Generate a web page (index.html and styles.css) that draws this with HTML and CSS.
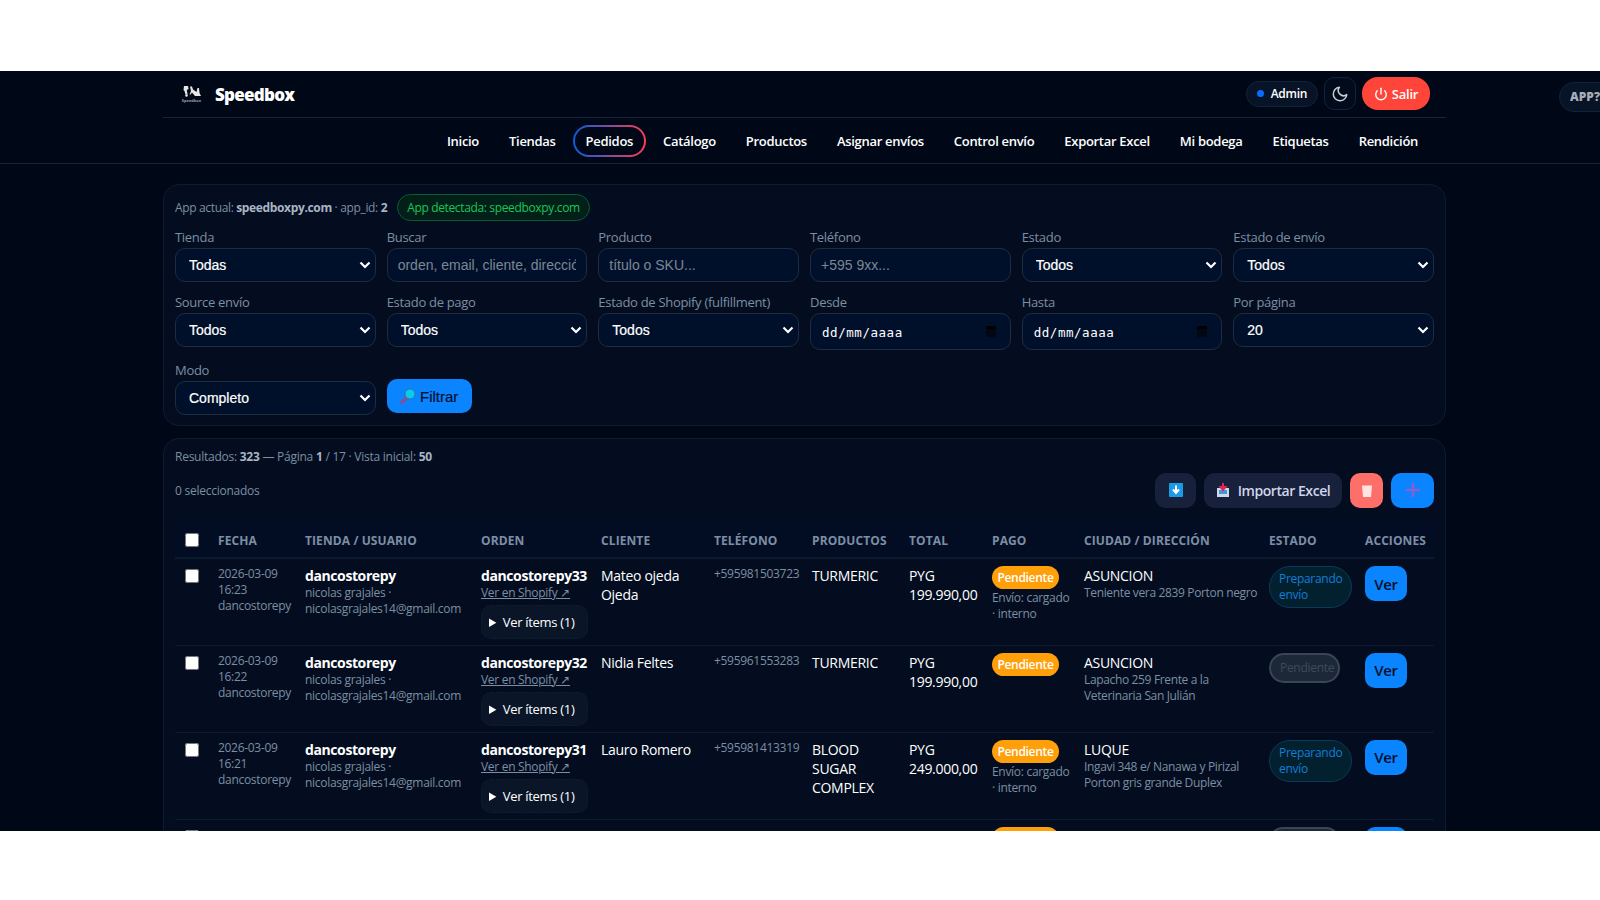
FILE: index.html
```html
<!DOCTYPE html>
<html lang="es">
<head>
    <meta charset="UTF-8">
    <meta name="viewport" content="width=device-width, initial-scale=1.0">
    <title>Pedidos - Speedbox</title>
    <link rel="stylesheet" href="styles.css">
</head>
<body>
    <div class="app">
        <header class="topbar">
            <div class="brand">
                <svg class="brand-logo" width="21" height="18" viewBox="0 0 21 18">
                    <path d="M3 1h4l.6 3-1.800 1 .8 4.500H4.500L3.500 6 2.500 5zM9 1.500l2 0 1 3 3.500 2.500 1-4 1.500 0 .5 5 1.500 3h-6L11 7.500 9.500 9.500H8.500L10 6z" fill="#e6e6e6"/>
                    <circle cx="5.500" cy="10.500" r="1.300" fill="#e6e6e6"/>
                    <text x="10.500" y="16.500" class="brand-micro" text-anchor="middle">Speedbox</text>
                </svg>
                <span class="brand-name">Speedbox</span>
            </div>
            <div class="top-actions">
                <span class="role-pill"><i class="role-dot"></i>Admin</span>
                <button class="theme-btn" type="button">
                    <svg width="18" height="18" viewBox="0 0 24 24" fill="none" stroke="#c9ced6" stroke-width="2" stroke-linecap="round" stroke-linejoin="round"><path d="M21 12.800A9 9 0 1 1 11.200 3a7 7 0 0 0 9.800 9.800z"/></svg>
                </button>
                <button class="logout-btn" type="button">
                    <svg width="14" height="14" viewBox="0 0 24 24" fill="none" stroke="#fff" stroke-width="2.400" stroke-linecap="round"><path d="M12 2v10"/><path d="M18.400 6.600a9 9 0 1 1-12.800 0"/></svg>
                    Salir
                </button>
            </div>
        </header>

        <div class="app-float">APP?</div>

        <nav class="mainnav">
            <a href="#">Inicio</a>
            <a href="#">Tiendas</a>
            <a href="#" class="active">Pedidos</a>
            <a href="#">Catálogo</a>
            <a href="#">Productos</a>
            <a href="#">Asignar envíos</a>
            <a href="#">Control envío</a>
            <a href="#">Exportar Excel</a>
            <a href="#">Mi bodega</a>
            <a href="#">Etiquetas</a>
            <a href="#">Rendición</a>
        </nav>

        <main class="content">
            <section class="panel filters">
                <div class="app-info">
                    <span>App actual: <b>speedboxpy.com</b> · app_id: <b>2</b></span>
                    <span class="detected">App detectada: speedboxpy.com</span>
                </div>
                <form class="filter-grid">
                    <div class="field">
                        <label>Tienda</label>
                        <select><option>Todas</option></select>
                    </div>
                    <div class="field">
                        <label>Buscar</label>
                        <input type="text" placeholder="orden, email, cliente, dirección">
                    </div>
                    <div class="field">
                        <label>Producto</label>
                        <input type="text" placeholder="título o SKU...">
                    </div>
                    <div class="field">
                        <label>Teléfono</label>
                        <input type="text" placeholder="+595 9xx...">
                    </div>
                    <div class="field">
                        <label>Estado</label>
                        <select><option>Todos</option></select>
                    </div>
                    <div class="field">
                        <label>Estado de envío</label>
                        <select><option>Todos</option></select>
                    </div>
                    <div class="field">
                        <label>Source envío</label>
                        <select><option>Todos</option></select>
                    </div>
                    <div class="field">
                        <label>Estado de pago</label>
                        <select><option>Todos</option></select>
                    </div>
                    <div class="field">
                        <label>Estado de Shopify (fulfillment)</label>
                        <select><option>Todos</option></select>
                    </div>
                    <div class="field">
                        <label>Desde</label>
                        <div class="date-input"><span>dd/mm/aaaa</span><i class="cal-icon"></i></div>
                    </div>
                    <div class="field">
                        <label>Hasta</label>
                        <div class="date-input"><span>dd/mm/aaaa</span><i class="cal-icon"></i></div>
                    </div>
                    <div class="field">
                        <label>Por página</label>
                        <select><option>20</option></select>
                    </div>
                    <div class="field">
                        <label>Modo</label>
                        <select><option>Completo</option></select>
                    </div>
                    <div class="field field-btn">
                        <button type="button" class="filter-btn">
                            <svg width="16" height="16" viewBox="0 0 16 16">
                                <path d="M7 9.500L2 14.500" stroke="#a0457e" stroke-width="3" stroke-linecap="round"/>
                                <circle cx="10" cy="6" r="5" fill="#10c8ee" stroke="#1e7fa8" stroke-width="1"/>
                            </svg>
                            Filtrar
                        </button>
                    </div>
                </form>
            </section>

            <section class="panel results">
                <div class="results-line">Resultados: <b>323</b> — Página <b>1</b> / 17 · Vista inicial: <b>50</b></div>
                <div class="results-bar">
                    <span class="selected-count">0 seleccionados</span>
                    <div class="results-actions">
                        <button class="tool-btn icon-only" type="button">
                            <svg width="14" height="14" viewBox="0 0 14 14"><rect width="14" height="14" rx="1" fill="#1a9be8"/><path d="M7 2.500v6M4 6.500L7 10l3-3.500" stroke="#fff" stroke-width="2" fill="none"/></svg>
                        </button>
                        <button class="tool-btn" type="button">
                            <svg width="14" height="16" viewBox="0 0 14 16"><path d="M1 6h12v9H1z" fill="#cfd8e6"/><path d="M3 8h8v4H3z" fill="#3d9bd8"/><path d="M7 1v6M4.500 5L7 8l2.500-3z" stroke="#e0245e" stroke-width="2" fill="#e0245e"/></svg>
                            Importar Excel
                        </button>
                        <button class="trash-btn" type="button">
                            <svg width="10" height="13" viewBox="0 0 10 13"><path d="M0 1.500h10L9 13H1z" fill="#ffe4e4"/></svg>
                        </button>
                        <button class="add-btn" type="button">
                            <svg width="14" height="14" viewBox="0 0 14 14"><path d="M7 0v14M0 7h14" stroke="#8a5fd0" stroke-width="2.400"/></svg>
                        </button>
                    </div>
                </div>

                <table class="orders">
                    <colgroup>
                        <col class="c-check"><col class="c-date"><col class="c-store"><col class="c-order">
                        <col class="c-client"><col class="c-phone"><col class="c-prod"><col class="c-total">
                        <col class="c-pay"><col class="c-city"><col class="c-status"><col class="c-act">
                    </colgroup>
                    <thead>
                        <tr>
                            <th class="cell-check"><input type="checkbox"></th>
                            <th>Fecha</th>
                            <th>Tienda / Usuario</th>
                            <th>Orden</th>
                            <th>Cliente</th>
                            <th>Teléfono</th>
                            <th>Productos</th>
                            <th>Total</th>
                            <th>Pago</th>
                            <th>Ciudad / Dirección</th>
                            <th>Estado</th>
                            <th>Acciones</th>
                        </tr>
                    </thead>
                    <tbody>
                        <tr>
                            <td class="cell-check"><input type="checkbox"></td>
                            <td class="muted">2026-03-09<br>16:23<br>dancostorepy</td>
                            <td><div class="strong">dancostorepy</div><div class="muted">nicolas grajales ·<br>nicolasgrajales14@gmail.com</div></td>
                            <td><div class="strong">dancostorepy33</div><a class="shop-link" href="#">Ver en Shopify ↗</a><details class="items"><summary>Ver ítems (1)</summary></details></td>
                            <td>Mateo ojeda Ojeda</td>
                            <td class="muted phone">+595981503723</td>
                            <td>TURMERIC</td>
                            <td>PYG 199.990,00</td>
                            <td><span class="badge-pay">Pendiente</span><div class="muted pay-note">Envío: cargado<br>· interno</div></td>
                            <td><div>ASUNCION</div><div class="muted addr">Teniente vera 2839 Porton negro</div></td>
                            <td><span class="status status-prep">Preparando envío</span></td>
                            <td><button class="ver-btn" type="button">Ver</button></td>
                        </tr>
                        <tr>
                            <td class="cell-check"><input type="checkbox"></td>
                            <td class="muted">2026-03-09<br>16:22<br>dancostorepy</td>
                            <td><div class="strong">dancostorepy</div><div class="muted">nicolas grajales ·<br>nicolasgrajales14@gmail.com</div></td>
                            <td><div class="strong">dancostorepy32</div><a class="shop-link" href="#">Ver en Shopify ↗</a><details class="items"><summary>Ver ítems (1)</summary></details></td>
                            <td>Nidia Feltes</td>
                            <td class="muted phone">+595961553283</td>
                            <td>TURMERIC</td>
                            <td>PYG 199.990,00</td>
                            <td><span class="badge-pay">Pendiente</span></td>
                            <td><div>ASUNCION</div><div class="muted addr">Lapacho 259 Frente a la<br>Veterinaria San Julián</div></td>
                            <td><span class="status status-pend">Pendiente</span></td>
                            <td><button class="ver-btn" type="button">Ver</button></td>
                        </tr>
                        <tr>
                            <td class="cell-check"><input type="checkbox"></td>
                            <td class="muted">2026-03-09<br>16:21<br>dancostorepy</td>
                            <td><div class="strong">dancostorepy</div><div class="muted">nicolas grajales ·<br>nicolasgrajales14@gmail.com</div></td>
                            <td><div class="strong">dancostorepy31</div><a class="shop-link" href="#">Ver en Shopify ↗</a><details class="items"><summary>Ver ítems (1)</summary></details></td>
                            <td>Lauro Romero</td>
                            <td class="muted phone">+595981413319</td>
                            <td>BLOOD SUGAR COMPLEX</td>
                            <td>PYG 249.000,00</td>
                            <td><span class="badge-pay">Pendiente</span><div class="muted pay-note">Envío: cargado<br>· interno</div></td>
                            <td><div>LUQUE</div><div class="muted addr">Ingavi 348 e/ Nanawa y Pirizal<br>Porton gris grande Duplex</div></td>
                            <td><span class="status status-prep">Preparando envío</span></td>
                            <td><button class="ver-btn" type="button">Ver</button></td>
                        </tr>
                        <tr>
                            <td class="cell-check"><input type="checkbox"></td>
                            <td></td>
                            <td></td>
                            <td></td>
                            <td></td>
                            <td></td>
                            <td></td>
                            <td></td>
                            <td><span class="badge-pay"></span></td>
                            <td></td>
                            <td><span class="status status-pend status-empty"></span></td>
                            <td><button class="ver-btn" type="button"></button></td>
                        </tr>
                    </tbody>
                </table>
            </section>
        </main>
    </div>
</body>
</html>
```

FILE: styles.css
```css
* {
    box-sizing: border-box;
}
html, body {
    height: 100%;
}
body {
    margin: 0;
    padding-top: 71px;
    background-color: #fff;
    font-family: "Open Sans", "Noto Sans", sans-serif;
    color: #fff;
    overflow: hidden;
}
.app {
    position: relative;
    height: 760px;
    overflow: hidden;
    background-color: #000817;
}

/* top bar */
.topbar {
    display: flex;
    align-items: center;
    justify-content: space-between;
    width: 1283px;
    height: 47px;
    margin-left: 163px;
    padding: 0 16px 0 18px;
    border-bottom: 1px solid #16233a;
}
.brand {
    display: flex;
    align-items: center;
    gap: 13px;
}
.brand-micro {
    fill: #9a9ea6;
    font-size: 4px;
    font-weight: 700;
}
.brand-name {
    font-size: 17px;
    font-weight: 800;
    letter-spacing: -0.75px;
}
.top-actions {
    display: flex;
    align-items: center;
    gap: 6px;
    margin-top: -1px;
}
.role-pill {
    display: flex;
    align-items: center;
    gap: 7px;
    height: 26px;
    padding: 0 10px;
    border: 1px solid #13233b;
    border-radius: 13px;
    background-color: #071327;
    font-size: 12px;
    font-weight: 600;
    letter-spacing: -0.3px;
}
.role-dot {
    width: 7px;
    height: 7px;
    border-radius: 50%;
    background-color: #0a6cff;
}
.theme-btn {
    display: flex;
    align-items: center;
    justify-content: center;
    width: 32px;
    height: 33px;
    padding: 0;
    border: 1px solid #13233b;
    border-radius: 10px;
    background-color: #020b1b;
}
.logout-btn {
    display: flex;
    align-items: center;
    justify-content: center;
    gap: 4px;
    width: 68px;
    height: 33px;
    padding: 0;
    border: none;
    border-radius: 16px;
    background-color: #ff453a;
    color: #fff;
    font-family: inherit;
    font-size: 13px;
    font-weight: 600;
    letter-spacing: -0.2px;
}
.app-float {
    position: absolute;
    top: 11px;
    left: 1559px;
    width: 70px;
    height: 30px;
    padding-left: 10px;
    border: 1px solid #13233b;
    border-radius: 15px;
    background-color: #071327;
    color: #a7adb6;
    font-size: 12px;
    font-weight: 800;
    line-height: 28px;
}

/* nav */
.mainnav {
    display: flex;
    align-items: center;
    justify-content: flex-end;
    gap: 4px;
    height: 46px;
    padding-right: 169px;
    border-bottom: 1px solid #16233a;
}
.mainnav a {
    padding: 7px 13px;
    border-radius: 16px;
    color: #fff;
    font-size: 13px;
    font-weight: 600;
    letter-spacing: -0.3px;
    text-decoration: none;
}
.mainnav a.active {
    border: 2px solid transparent;
    padding: 5px 11px;
    background: linear-gradient(#000817, #000817) padding-box, linear-gradient(90deg, #0a5ce0, #ff3b50) border-box;
}

/* panels */
.content {
    width: 1283px;
    margin-left: 163px;
    padding-top: 20px;
}
.panel {
    border: 1px solid #0e1b2e;
    border-radius: 16px;
    background-color: #030d1f;
    padding: 0 11px;
}
.filters {
    height: 242px;
    margin-bottom: 12px;
    padding-top: 9px;
}
.app-info {
    display: flex;
    align-items: center;
    gap: 10px;
    height: 27px;
    color: #7d8ea3;
    font-size: 12px;
    letter-spacing: -0.35px;
}
.app-info b {
    color: #a9b5c4;
}
.detected {
    padding: 0 9px;
    height: 27px;
    line-height: 25px;
    border: 1px solid #0c5a34;
    border-radius: 14px;
    background-color: #032018;
    color: #16c65a;
}
.filter-grid {
    display: grid;
    grid-template-columns: repeat(6, 1fr);
    column-gap: 11px;
    margin-top: 7px;
}
.field {
    display: flex;
    flex-direction: column;
    height: 65px;
}
.field:nth-child(n+7) {
    height: 68px;
}
.field label {
    height: 20px;
    color: #7d8ea3;
    font-size: 13px;
    letter-spacing: -0.3px;
    line-height: 19px;
    white-space: nowrap;
}
.field select, .field input {
    width: 100%;
    height: 34px;
    border: 1px solid #1f2c3f;
    border-radius: 10px;
    background-color: #01102a;
    color: #fff;
    font-family: "Liberation Sans", Arial, sans-serif;
    font-size: 14px;
    padding: 0 10px;
}
.field select {
    appearance: none;
    padding-left: 13px;
    background-image: url("data:image/svg+xml,%3Csvg xmlns='http://www.w3.org/2000/svg' width='12' height='8' viewBox='0 0 12 8'%3E%3Cpath d='M1.500 1.500L6 6l4.500-4.500' fill='none' stroke='%23fff' stroke-width='2.200'/%3E%3C/svg%3E");
    background-repeat: no-repeat;
    background-position: right 4px center;
    font-weight: 500;
    -webkit-text-stroke: 0.2px #fff;
}
.field input::placeholder {
    color: #7c8796;
    opacity: 1;
}
.date-input {
    display: flex;
    align-items: center;
    justify-content: space-between;
    height: 37px;
    padding: 2px 14px 0 11px;
    border: 1px solid #1f2c3f;
    border-radius: 10px;
    background-color: #01102a;
    font-family: "DejaVu Sans Mono", monospace;
    font-size: 12.5px;
    letter-spacing: 0.55px;
}
.cal-icon {
    width: 10px;
    height: 11px;
    margin-top: -3px;
    border-radius: 1px;
    border-top: 3px solid #000;
    background-color: #010814;
}
.field-btn {
    padding-top: 18px;
}
.filter-btn {
    display: flex;
    align-items: center;
    justify-content: center;
    gap: 4px;
    width: 85px;
    height: 34px;
    padding: 0;
    border: none;
    border-radius: 10px;
    background-color: #0a84ff;
    color: #04102a;
    font-family: "Liberation Sans", Arial, sans-serif;
    font-size: 15px;
    -webkit-text-stroke: 0.2px #04102a;
}

/* results */
.results {
    height: 420px;
    padding-top: 8px;
}
.results-line {
    height: 20px;
    color: #7d8ea3;
    font-size: 12px;
    letter-spacing: -0.25px;
    line-height: 20px;
}
.results-line b {
    color: #a9b5c4;
}
.results-bar {
    display: flex;
    align-items: center;
    justify-content: space-between;
    height: 34px;
    margin-top: 6px;
}
.selected-count {
    color: #7d8ea3;
    font-size: 12px;
    letter-spacing: -0.25px;
}
.results-actions {
    display: flex;
    gap: 8px;
}
.tool-btn {
    display: flex;
    align-items: center;
    justify-content: center;
    gap: 8px;
    width: 138px;
    height: 35px;
    padding: 0;
    border: none;
    border-radius: 11px;
    background-color: #18213c;
    color: #cfd6ea;
    font-family: inherit;
    font-size: 14px;
    font-weight: 600;
    letter-spacing: -0.45px;
}
.tool-btn.icon-only {
    width: 41px;
}
.trash-btn, .add-btn {
    display: flex;
    align-items: center;
    justify-content: center;
    width: 33px;
    height: 35px;
    padding: 0;
    border: none;
    border-radius: 10px;
    background-color: #ff6f69;
}
.add-btn {
    width: 43px;
    background-color: #0a84ff;
}

/* table */
.orders {
    width: 1259px;
    margin-top: 13px;
    border-collapse: collapse;
    table-layout: fixed;
    font-size: 14px;
    letter-spacing: -0.3px;
    line-height: 19px;
}
.c-check { width: 36px; }
.c-date { width: 87px; }
.c-store { width: 176px; }
.c-order { width: 120px; }
.c-client { width: 113px; }
.c-phone { width: 98px; }
.c-prod { width: 97px; }
.c-total { width: 83px; }
.c-pay { width: 92px; }
.c-city { width: 185px; }
.c-status { width: 96px; }
.c-act { width: 76px; }
.orders th {
    height: 38px;
    padding: 3px 7px 0;
    border-bottom: 2px solid #0d1a2d;
    background-color: #020d24;
    color: #7d8ea3;
    font-size: 12px;
    font-weight: 700;
    letter-spacing: 0.1px;
    text-align: left;
    text-transform: uppercase;
    white-space: nowrap;
}
.orders td {
    height: 87px;
    padding: 7px 7px 0;
    border-bottom: 1px solid #0d1a2d;
    vertical-align: top;
}
.orders input[type="checkbox"] {
    display: block;
    width: 14px;
    height: 14px;
    margin: 0;
}
.orders .cell-check {
    padding-left: 10px;
    padding-right: 0;
}
.orders td.cell-check {
    padding-top: 10px;
}
.muted {
    color: #7d8ea3;
    font-size: 12px;
    letter-spacing: -0.3px;
    line-height: 16px;
}
.phone {
    white-space: nowrap;
}
.addr {
    margin-right: -7px;
    letter-spacing: -0.35px;
}
.strong {
    font-weight: 700;
    letter-spacing: -0.4px;
}
.shop-link {
    display: block;
    color: #7d8ea3;
    font-size: 12px;
    letter-spacing: -0.3px;
    line-height: 16px;
}
.items {
    width: 107px;
    height: 34px;
    margin-top: 4px;
    padding-left: 7px;
    border: 1px dashed #0f1d30;
    border-radius: 10px;
    background-color: #0a1628;
    font-size: 13px;
    line-height: 32px;
}
.badge-pay {
    display: inline-block;
    width: 67px;
    height: 23px;
    border-radius: 12px;
    background-color: #ff9f0a;
    font-size: 12px;
    font-weight: 600;
    line-height: 23px;
    text-align: center;
    vertical-align: top;
}
.pay-note {
    margin: 1px -8px 0 0;
}
.status {
    display: inline-block;
    padding: 4px 9px;
    border: 1px solid;
    border-radius: 21px;
    font-size: 12px;
    letter-spacing: -0.3px;
    line-height: 16px;
    vertical-align: top;
}
.status-prep {
    width: 83px;
    border-color: #0a3a58;
    background-color: #03202f;
    color: #0f7fd8;
}
.status-pend {
    width: 71px;
    padding-top: 5px;
    padding-bottom: 5px;
    border-color: #3a4556;
    background-color: #1c2838;
    color: #3c4a5c;
    border-width: 2px;
}
.status-empty {
    height: 28px;
}
.ver-btn {
    display: block;
    width: 42px;
    height: 35px;
    padding: 0;
    border: none;
    border-radius: 10px;
    background-color: #0a84ff;
    color: #04102a;
    font-family: inherit;
    font-size: 15px;
    font-weight: 600;
    letter-spacing: -0.3px;
}
```
